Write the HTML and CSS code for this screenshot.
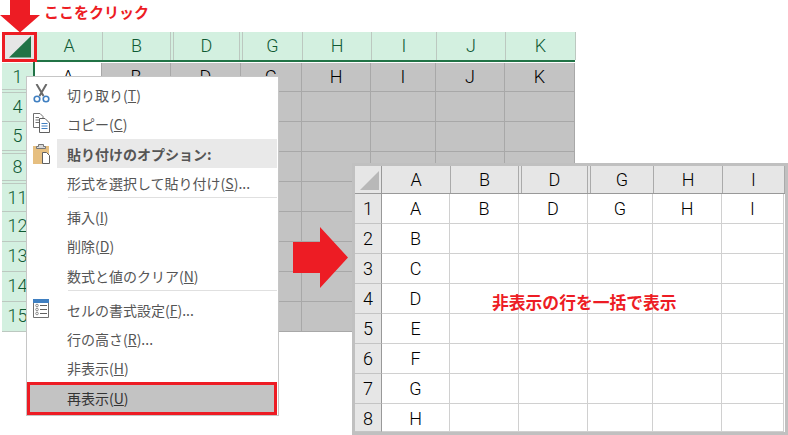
FILE: index.html
```html
<!DOCTYPE html>
<html>
<head>
    <title>非表示の行を一括で表示</title>
    <link rel="stylesheet" href="styles.css">
</head>
<body>
    <div class="canvas">
        <!-- left sheet -->
        <div class="sheet-green">
            <div class="green-head">
                <div class="green-corner">
                    <svg width="28" height="24" viewBox="0 0 28 24"><path d="M26 0V21.500H4Z" fill="#217346"/></svg>
                </div>
                <div class="gh hd-a">A</div>
                <div class="gh hd-b">B</div>
                <div class="gh hd-d">D</div>
                <div class="gh hd-g">G</div>
                <div class="gh hd-h">H</div>
                <div class="gh hd-i">I</div>
                <div class="gh hd-j">J</div>
                <div class="gh hd-k">K</div>
            </div>
            <div class="green-body">
                <div class="row-labels">
                    <div class="rl rl-1">1</div>
                    <div class="rl rl-4">4</div>
                    <div class="rl rl-5">5</div>
                    <div class="rl rl-8">8</div>
                    <div class="rl rl-11">11</div>
                    <div class="rl">12</div>
                    <div class="rl">13</div>
                    <div class="rl">14</div>
                    <div class="rl">15</div>
                </div>
                <div class="gray-grid">
                    <div class="gray-row first">
                        <div class="cell white col-a">A</div>
                        <div class="cell col-b">B</div>
                        <div class="cell col-d">D</div>
                        <div class="cell col-g">G</div>
                        <div class="cell col-h">H</div>
                        <div class="cell col-i">I</div>
                        <div class="cell col-j">J</div>
                        <div class="cell col-k">K</div>
                    </div>
                    <div class="gray-row"><div class="cell col-a"></div><div class="cell col-b"></div><div class="cell col-d"></div><div class="cell col-g"></div><div class="cell col-h"></div><div class="cell col-i"></div><div class="cell col-j"></div><div class="cell col-k"></div></div>
                    <div class="gray-row"><div class="cell col-a"></div><div class="cell col-b"></div><div class="cell col-d"></div><div class="cell col-g"></div><div class="cell col-h"></div><div class="cell col-i"></div><div class="cell col-j"></div><div class="cell col-k"></div></div>
                    <div class="gray-row"><div class="cell col-a"></div><div class="cell col-b"></div><div class="cell col-d"></div><div class="cell col-g"></div><div class="cell col-h"></div><div class="cell col-i"></div><div class="cell col-j"></div><div class="cell col-k"></div></div>
                    <div class="gray-row"><div class="cell col-a"></div><div class="cell col-b"></div><div class="cell col-d"></div><div class="cell col-g"></div><div class="cell col-h"></div><div class="cell col-i"></div><div class="cell col-j"></div><div class="cell col-k"></div></div>
                    <div class="gray-row"><div class="cell col-a"></div><div class="cell col-b"></div><div class="cell col-d"></div><div class="cell col-g"></div><div class="cell col-h"></div><div class="cell col-i"></div><div class="cell col-j"></div><div class="cell col-k"></div></div>
                    <div class="gray-row"><div class="cell col-a"></div><div class="cell col-b"></div><div class="cell col-d"></div><div class="cell col-g"></div><div class="cell col-h"></div><div class="cell col-i"></div><div class="cell col-j"></div><div class="cell col-k"></div></div>
                    <div class="gray-row"><div class="cell col-a"></div><div class="cell col-b"></div><div class="cell col-d"></div><div class="cell col-g"></div><div class="cell col-h"></div><div class="cell col-i"></div><div class="cell col-j"></div><div class="cell col-k"></div></div>
                    <div class="gray-row"><div class="cell col-a"></div><div class="cell col-b"></div><div class="cell col-d"></div><div class="cell col-g"></div><div class="cell col-h"></div><div class="cell col-i"></div><div class="cell col-j"></div><div class="cell col-k"></div></div>
                </div>
            </div>
        </div>

        <!-- annotations -->
        <svg class="arrow-down" width="40" height="33" viewBox="0 0 40 33"><path d="M10 0H30V15H40L20 32.500L0 15H10Z" fill="#ed1c24"/></svg>
        <div class="click-label">ここをクリック</div>
        <div class="corner-box"></div>
        <svg class="arrow-right" width="56" height="62" viewBox="0 0 56 62"><path d="M0 15H27V0L55 30.500L27 61V46H0Z" fill="#ed1c24"/></svg>

        <!-- context menu -->
        <div class="menu">
            <div class="menu-item">
                <svg class="menu-icon" width="17" height="19" viewBox="0 0 17 19" fill="none">
                    <path d="M3.500 0L10.500 12M13.500 0L6.500 12" stroke="#6a6a6a" stroke-width="2"/>
                    <circle cx="4" cy="15" r="2.800" stroke="#3f7fc1" stroke-width="1.600"/>
                    <circle cx="13" cy="15" r="2.800" stroke="#3f7fc1" stroke-width="1.600"/>
                </svg>
                <span>切り取り(<u>T</u>)</span>
            </div>
            <div class="menu-item">
                <svg class="menu-icon" width="18" height="20" viewBox="0 0 18 20" fill="none">
                    <path d="M.500 .500H7L10 3.500V14.500H.500Z" fill="#fff" stroke="#707070"/>
                    <path d="M2.500 4.500H6M2.500 7H6M2.500 9.500H6" stroke="#707070"/>
                    <path d="M6.500 5.500H12L16.500 10V19.500H6.500Z" fill="#fff" stroke="#606060"/>
                    <path d="M8.500 10.500H14.500M8.500 13H14.500M8.500 15.500H14.500" stroke="#3f7fc1"/>
                </svg>
                <span>コピー(<u>C</u>)</span>
            </div>
            <div class="menu-item paste-head">
                <svg class="menu-icon" width="18" height="22" viewBox="0 0 18 22">
                    <path d="M0 3H16V21H0Z" fill="#e6bf80"/>
                    <path d="M5.500 3.500V1.500H10.500V3.500H12.500V5.500H3.500V3.500Z" fill="#d8d8d8" stroke="#777"/>
                    <path d="M9.500 9.500H13.500L16.500 12.500V20.500H9.500Z" fill="#fff" stroke="#606060"/>
                </svg>
                <span class="paste-title">貼り付けのオプション:</span>
            </div>
            <div class="menu-item">
                <span>形式を選択して貼り付け(<u>S</u>)...</span>
            </div>
            <div class="menu-sep"></div>
            <div class="menu-item">
                <span>挿入(<u>I</u>)</span>
            </div>
            <div class="menu-item">
                <span>削除(<u>D</u>)</span>
            </div>
            <div class="menu-item">
                <span>数式と値のクリア(<u>N</u>)</span>
            </div>
            <div class="menu-sep"></div>
            <div class="menu-item">
                <svg class="menu-icon" width="17" height="19" viewBox="0 0 17 19" fill="none">
                    <path d="M.500 .500H15.500V18.500H.500Z" fill="#fff" stroke="#707070"/>
                    <path d="M0 0H16V4H0Z" fill="#3f7fc1"/>
                    <path d="M7 6.500H14M7 10.500H14M7 14.500H14" stroke="#606060"/>
                    <circle cx="4" cy="6.500" r="1.300" stroke="#8a8a8a"/>
                    <circle cx="4" cy="10.500" r="1.300" stroke="#8a8a8a"/>
                    <circle cx="4" cy="14.500" r="1.300" stroke="#8a8a8a"/>
                </svg>
                <span>セルの書式設定(<u>F</u>)...</span>
            </div>
            <div class="menu-item">
                <span>行の高さ(<u>R</u>)...</span>
            </div>
            <div class="menu-item">
                <span>非表示(<u>H</u>)</span>
            </div>
            <div class="menu-item unhide">
                <span>再表示(<u>U</u>)</span>
            </div>
        </div>

        <!-- right sheet -->
        <div class="sheet-gray">
            <div class="head-row">
                <div class="gray-corner">
                    <svg width="20" height="20" viewBox="0 0 20 20"><path d="M19 0V19H0Z" fill="#b8b8b8"/></svg>
                </div>
                <div class="hc w-a">A</div>
                <div class="hc w-b dbl">B</div>
                <div class="hc w-d dbl">D</div>
                <div class="hc w-g">G</div>
                <div class="hc w-h">H</div>
                <div class="hc w-i">I</div>
            </div>
            <div class="data-row"><div class="num">1</div><div class="dc b-a">A</div><div class="dc b-b">B</div><div class="dc b-d">D</div><div class="dc b-g">G</div><div class="dc b-h">H</div><div class="dc b-i">I</div></div>
            <div class="data-row"><div class="num">2</div><div class="dc b-a">B</div><div class="dc b-b"></div><div class="dc b-d"></div><div class="dc b-g"></div><div class="dc b-h"></div><div class="dc b-i"></div></div>
            <div class="data-row"><div class="num">3</div><div class="dc b-a">C</div><div class="dc b-b"></div><div class="dc b-d"></div><div class="dc b-g"></div><div class="dc b-h"></div><div class="dc b-i"></div></div>
            <div class="data-row"><div class="num">4</div><div class="dc b-a">D</div><div class="dc b-b"></div><div class="dc b-d"></div><div class="dc b-g"></div><div class="dc b-h"></div><div class="dc b-i"></div></div>
            <div class="data-row"><div class="num">5</div><div class="dc b-a">E</div><div class="dc b-b"></div><div class="dc b-d"></div><div class="dc b-g"></div><div class="dc b-h"></div><div class="dc b-i"></div></div>
            <div class="data-row"><div class="num">6</div><div class="dc b-a">F</div><div class="dc b-b"></div><div class="dc b-d"></div><div class="dc b-g"></div><div class="dc b-h"></div><div class="dc b-i"></div></div>
            <div class="data-row"><div class="num">7</div><div class="dc b-a">G</div><div class="dc b-b"></div><div class="dc b-d"></div><div class="dc b-g"></div><div class="dc b-h"></div><div class="dc b-i"></div></div>
            <div class="data-row last"><div class="num">8</div><div class="dc b-a">H</div><div class="dc b-b"></div><div class="dc b-d"></div><div class="dc b-g"></div><div class="dc b-h"></div><div class="dc b-i"></div></div>
            <div class="note">非表示の行を一括で表示</div>
        </div>
    </div>
</body>
</html>
```

FILE: styles.css
```css
:root {
    --red: #ed1c24;
    --excel-green: #217346;
    --green-text: #0f5a34;
    --green-head: #d3f0e0;
    --green-line: #bcc8c0;
    --gray-fill: #c3c3c3;
    --gray-line: #a8a8a8;
    --cjk-font: "Noto Sans CJK JP", "Noto Sans", sans-serif;
    --cell-font: Roboto, "Noto Sans CJK JP", sans-serif;
}

* {
    box-sizing: border-box;
}

body {
    margin: 0;
    background: #fff;
    font-family: var(--cjk-font);
}

.canvas {
    position: relative;
    width: 788px;
    height: 435px;
    overflow: hidden;
}

/* left sheet */
.sheet-green {
    position: absolute;
    left: 2px;
    top: 32px;
    font-family: var(--cell-font);
    font-size: 18px;
    font-weight: 300;
}

.hd-a { width: 67px; }
.hd-b { width: 71px; }
.hd-d { width: 69px; }
.hd-g { width: 60px; }
.hd-h { width: 69px; }
.hd-i { width: 65px; }
.hd-j { width: 69px; }
.hd-k { width: 70px; }

.col-a { width: 67px; }
.col-b { width: 69px; }
.col-d { width: 70px; }
.col-g { width: 61px; }
.col-h { width: 69px; }
.col-i { width: 65px; }
.col-j { width: 69px; }
.col-k { width: 70px; }

.green-head {
    display: flex;
    height: 28px;
}

.green-corner {
    width: 34px;
    background: #e6e6e6;
    padding: 4px 0 0 3px;
}

.green-corner svg {
    display: block;
}

.gh {
    background: var(--green-head);
    border-right: 1px solid var(--green-line);
    color: var(--green-text);
    line-height: 28px;
    text-align: center;
}

.hd-b,
.hd-d {
    border-right: 4px double var(--green-line);
}

.green-body {
    display: flex;
    border-top: 2px solid var(--excel-green);
    width: 573px;
}

.row-labels {
    width: 34px;
    padding-top: 1px;
}

.rl {
    width: 31px;
    height: 30px;
    background: var(--green-head);
    border-bottom: 1px solid var(--green-line);
    color: var(--green-text);
    line-height: 28px;
    text-align: center;
}

.rl-1 { height: 30px; border-bottom: 4px double var(--green-line); line-height: 28px; }
.rl-4 { height: 29px; }
.rl-5 { height: 32px; border-bottom: 4px double var(--green-line); }
.rl-8 { height: 30px; border-bottom: 4px double var(--green-line); line-height: 26px; }
.rl-11 { height: 28px; }

.gray-grid {
    border-left: 2px solid var(--excel-green);
    padding-top: 1px;
    margin-left: -3px;
}

.gray-row {
    display: flex;
    height: 30px;
}

.gray-row.first {
    height: 29px;
}

.cell {
    background: var(--gray-fill);
    border-right: 1px solid var(--gray-line);
    border-bottom: 1px solid var(--gray-line);
    color: #000;
    line-height: 28px;
    text-align: center;
}

.cell.white {
    background: #fff;
}

/* annotations */
.arrow-down {
    position: absolute;
    left: 0;
    top: 0;
}

.click-label {
    position: absolute;
    left: 44px;
    top: 1px;
    color: var(--red);
    font-size: 15px;
    font-weight: 700;
    line-height: 22px;
}

.corner-box {
    position: absolute;
    left: 2px;
    top: 32px;
    width: 35px;
    height: 30px;
    border: 3px solid var(--red);
}

.arrow-right {
    position: absolute;
    left: 293px;
    top: 227px;
}

/* context menu */
.menu {
    position: absolute;
    left: 26px;
    top: 76px;
    width: 253px;
    height: 340px;
    padding: 3px 1px 0 0;
    background: #fff;
    border: 1px solid #c6c6c6;
    color: #555;
    font-size: 14px;
}

.menu-item {
    position: relative;
    height: 29.250px;
    padding-left: 40px;
    line-height: 30px;
    white-space: nowrap;
}

.menu-icon {
    position: absolute;
    left: 6px;
    top: 4px;
}

.paste-head {
    margin-left: 30px;
    padding-left: 10px;
    background: #e9e9e9;
}

.paste-head .menu-icon {
    left: -24px;
}

.paste-title {
    font-weight: 700;
}

.menu-sep {
    height: 1px;
    margin: 0 0 4px 41px;
    background: #e0e0e0;
}

.unhide {
    position: absolute;
    left: 0;
    right: 1px;
    bottom: 0;
    height: 33px;
    background: var(--gray-fill);
    border: 3px solid var(--red);
    padding-left: 37px;
    line-height: 27px;
    color: #333;
}

/* right sheet */
.sheet-gray {
    position: absolute;
    left: 352px;
    top: 163px;
    width: 436px;
    height: 272px;
    border: 3px solid #c0c0c0;
    background: #fff;
    color: #000;
    font-family: var(--cell-font);
    font-size: 18px;
    font-weight: 300;
}

.w-a { width: 69px; }
.w-b { width: 71px; }
.w-d { width: 69px; }
.w-g { width: 63px; }
.w-h { width: 69px; }
.w-i { width: 62px; }

.head-row {
    display: flex;
    height: 28px;
    background: #e6e6e6;
    border-bottom: 1px solid #999;
}

.gray-corner {
    width: 27px;
    padding: 5px 0 0 5px;
    border-right: 1px solid #999;
}

.gray-corner svg {
    display: block;
}

.hc {
    border-right: 1px solid #aaa;
    line-height: 27px;
    text-align: center;
}

.hc.dbl {
    border-right: 4px double #aaa;
}

.data-row {
    display: flex;
    height: 30px;
}

.data-row.last {
    height: 28px;
}

.num {
    width: 27px;
    background: #e6e6e6;
    border-right: 1px solid #999;
    border-bottom: 1px solid #c4c4c4;
    line-height: 29px;
    text-align: center;
}

.dc {
    border-right: 1px solid #d0d0d0;
    border-bottom: 1px solid #d0d0d0;
    line-height: 29px;
    text-align: center;
}

.b-a { width: 68px; }
.b-b { width: 69px; }
.b-d { width: 69px; }
.b-g { width: 65px; }
.b-h { width: 69px; }
.b-i { width: 62px; }

.note {
    position: absolute;
    left: 137px;
    top: 124px;
    color: var(--red);
    font-family: var(--cjk-font);
    font-size: 16.800px;
    font-weight: 700;
    line-height: 24px;
    white-space: nowrap;
}
```
